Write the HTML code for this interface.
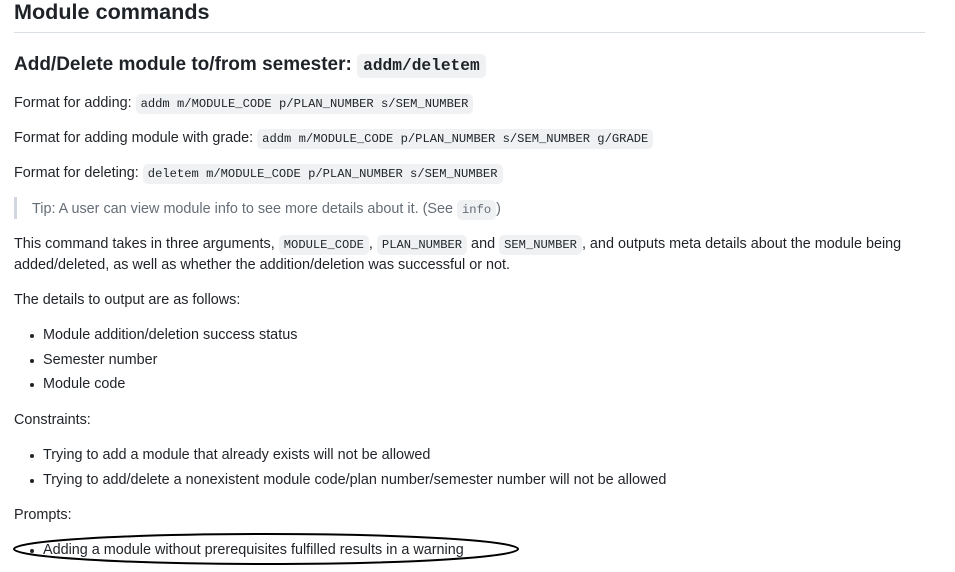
<!DOCTYPE html>
<html><head><style>
body{margin:0;width:955px;height:572px;background:#fff;font-family:"Liberation Sans",sans-serif;color:#1f2328;position:relative;overflow:hidden}
.l{position:absolute;left:14px;font-size:14.4px;line-height:20px;white-space:nowrap;margin-top:1px}
code{font-family:"Liberation Mono",monospace;font-size:12.15px;background:#eff1f3;border-radius:5px;padding:3px 5px}
.b{left:43px}
.b:before{content:"";position:absolute;left:-13px;top:9px;width:4px;height:4px;border-radius:50%;background:#1f2328}
</style></head><body>
<div style="position:absolute;left:14px;top:-3px;font-size:21.6px;font-weight:bold;line-height:30px">Module commands</div>
<div style="position:absolute;left:14px;top:32px;width:911px;height:1px;background:#d8dee4"></div>
<div style="position:absolute;left:14px;top:52px;font-size:19px;font-weight:bold;line-height:26px;white-space:nowrap">Add/Delete module to/from semester: <code style="font-size:16.2px;padding:3px 6px;font-weight:bold">addm/deletem</code></div>
<div class="l" style="top:92px">Format for adding: <code>addm m/MODULE_CODE p/PLAN_NUMBER s/SEM_NUMBER</code></div>
<div class="l" style="top:127px">Format for adding module with grade: <code>addm m/MODULE_CODE p/PLAN_NUMBER s/SEM_NUMBER g/GRADE</code></div>
<div class="l" style="top:162px">Format for deleting: <code>deletem m/MODULE_CODE p/PLAN_NUMBER s/SEM_NUMBER</code></div>
<div style="position:absolute;left:14px;top:197px;width:3px;height:22px;background:#d0d7de"></div>
<div class="l" style="top:198px;left:32px;color:#656d76">Tip: A user can view module info to see more details about it. (See <code>info</code>)</div>
<div class="l" style="top:233px">This command takes in three arguments, <code>MODULE_CODE</code>, <code>PLAN_NUMBER</code> and <code>SEM_NUMBER</code>, and outputs meta details about the module being</div>
<div class="l" style="top:254px">added/deleted, as well as whether the addition/deletion was successful or not.</div>
<div class="l" style="top:289px">The details to output are as follows:</div>
<div class="l b" style="top:324px">Module addition/deletion success status</div>
<div class="l b" style="top:349px">Semester number</div>
<div class="l b" style="top:373px">Module code</div>
<div class="l" style="top:409px">Constraints:</div>
<div class="l b" style="top:444px">Trying to add a module that already exists will not be allowed</div>
<div class="l b" style="top:469px">Trying to add/delete a nonexistent module code/plan number/semester number will not be allowed</div>
<div class="l" style="top:504px">Prompts:</div>
<div class="l b" style="top:539px">Adding a module without prerequisites fulfilled results in a warning</div>
<svg style="position:absolute;left:0;top:0" width="955" height="572"><ellipse cx="266" cy="549" rx="252" ry="15" fill="none" stroke="#000" stroke-width="2"/></svg>
</body></html>
